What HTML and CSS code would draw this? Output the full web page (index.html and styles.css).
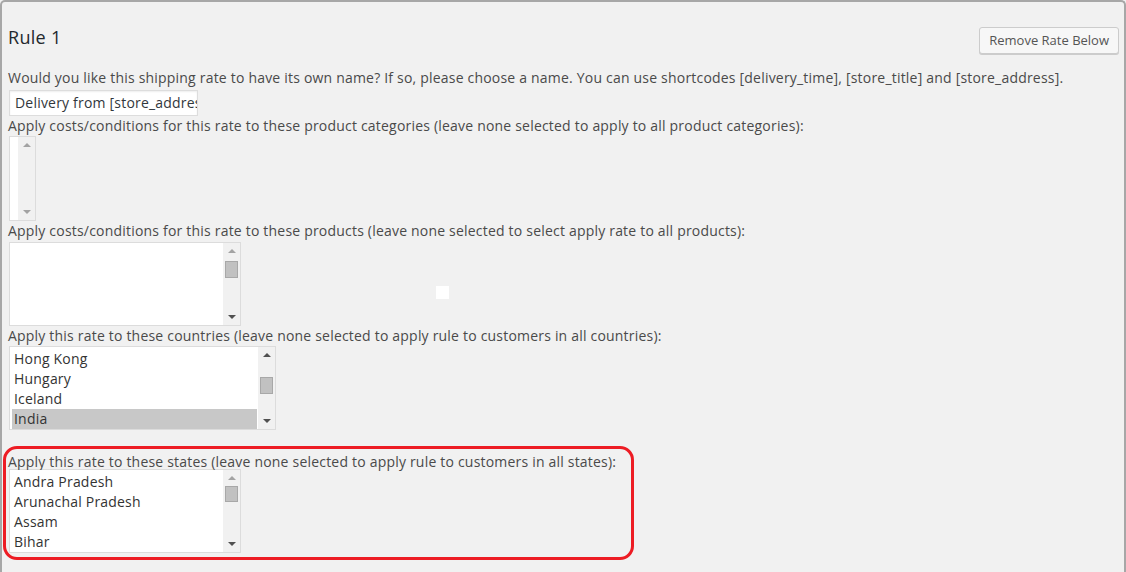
FILE: index.html
```html
<!DOCTYPE html>
<html>
<head>
<meta charset="utf-8">
<link rel="stylesheet" href="styles.css">
</head>
<body>
<div class="frame">
  <div class="header">
    <h2 class="title">Rule 1</h2>
    <button class="btn">Remove Rate Below</button>
  </div>
  <p class="label">Would you like this shipping rate to have its own name? If so, please choose a name. You can use shortcodes [delivery_time], [store_title] and [store_address].</p>
  <div class="input"><span>Delivery from [store_address]</span></div>
  <p class="label">Apply costs/conditions for this rate to these product categories (leave none selected to apply to all product categories):</p>
  <div class="box box-cat">
    <div class="list"></div>
    <div class="sb">
      <span class="arr up off"></span>
      <span class="track"></span>
      <span class="arr down off"></span>
    </div>
  </div>
  <p class="label">Apply costs/conditions for this rate to these products (leave none selected to select apply rate to all products):</p>
  <div class="row">
    <div class="box box-prod">
      <div class="list"></div>
      <div class="sb">
        <span class="arr up off"></span>
        <span class="track"><span class="thumb t-prod"></span></span>
        <span class="arr down"></span>
      </div>
    </div>
    <span class="dot"></span>
  </div>
  <p class="label">Apply this rate to these countries (leave none selected to apply rule to customers in all countries):</p>
  <div class="box box-country">
    <div class="list">
      <div class="opt">Hong Kong</div>
      <div class="opt">Hungary</div>
      <div class="opt">Iceland</div>
      <div class="opt sel">India</div>
    </div>
    <div class="sb">
      <span class="arr up"></span>
      <span class="track"><span class="thumb t-country"></span></span>
      <span class="arr down"></span>
    </div>
  </div>
  <div class="highlight">
    <p class="label">Apply this rate to these states (leave none selected to apply rule to customers in all states):</p>
    <div class="box box-state">
      <div class="list">
        <div class="opt">Andra Pradesh</div>
        <div class="opt">Arunachal Pradesh</div>
        <div class="opt">Assam</div>
        <div class="opt">Bihar</div>
      </div>
      <div class="sb">
        <span class="arr up off"></span>
        <span class="track"><span class="thumb t-state"></span></span>
        <span class="arr down"></span>
      </div>
    </div>
  </div>
</div>
</body>
</html>
```

FILE: styles.css
```css
* { box-sizing: border-box; }
html, body {
  margin: 0;
  padding: 0;
  background: #f1f1f1;
  font-family: "Open Sans", "Liberation Sans", sans-serif;
  color: #4a4a4a;
  font-size: 14px;
  letter-spacing: 0.2px;
  overflow: hidden;
}
.frame {
  height: 572px;
  border: 2px solid #a7a7a7;
  border-bottom: none;
  border-radius: 5px 5px 0 0;
  padding: 0 5px 0 6px;
}
.header {
  display: flex;
  justify-content: space-between;
  align-items: flex-start;
}
.title {
  margin: 23px 0 0 0;
  font-size: 18px;
  line-height: 24px;
  font-weight: 400;
  letter-spacing: 0.3px;
  color: #23282d;
}
.btn {
  margin-top: 25px;
  height: 27px;
  padding: 0 9px;
  border: 1px solid #cccccc;
  border-radius: 3px;
  background: #f7f7f7;
  color: #555;
  font-family: "Open Sans", "Liberation Sans", sans-serif;
  font-size: 13px;
  letter-spacing: 0;
  line-height: 25px;
  box-shadow: 0 1px 0 #ccc;
}
.label {
  margin: 0;
  line-height: 20px;
  white-space: nowrap;
}
.header + .label { margin-top: 14px; }
.input {
  margin: 2px 0 0 1px;
  width: 189px;
  height: 26px;
  border: 1px solid #ddd;
  background: #fff;
  padding: 0 6px 0 5px;
  overflow: hidden;
  white-space: nowrap;
  line-height: 24px;
  color: #32373c;
  box-shadow: inset 0 1px 2px rgba(0,0,0,0.07);
}
.box {
  display: flex;
  margin-left: 1px;
  border: 1px solid #dcdcdc;
  background: #fff;
}
.box-cat { width: 27px; height: 85px; }
.box-prod { width: 232px; height: 84px; margin-top: 1px; }
.box-country { width: 267px; height: 84px; }
.box-state { width: 232px; height: 84px; margin-top: -3px; }
.list {
  flex: 1;
  padding: 2px 1px 0 2px;
  background: #fff;
}
.box-cat .list { flex: 0 0 8px; padding: 0; }
.box-state .list { padding-top: 2px; }
.opt {
  height: 20px;
  line-height: 20px;
  padding-left: 2px;
  color: #333;
}
.opt.sel { background: #c8c8c8; }
.sb {
  width: 17px;
  flex: 0 0 17px;
  background: #f1f1f1;
  display: flex;
  flex-direction: column;
  align-items: center;
}
.arr {
  width: 0;
  height: 0;
  border-left: 4px solid transparent;
  border-right: 4px solid transparent;
  flex: 0 0 auto;
}
.arr.up {
  margin: 6px 0 5px;
  border-bottom: 4px solid #505050;
}
.arr.down {
  margin: 5px 0 6px;
  border-top: 4px solid #505050;
}
.arr.up.off { border-bottom-color: #a3a3a3; }
.arr.down.off { border-top-color: #a3a3a3; }
.track {
  flex: 1;
  width: 100%;
  display: flex;
  justify-content: center;
}
.thumb {
  width: 13px;
  background: #c1c1c1;
  border: 1px solid #a8a8a8;
}
.t-prod { height: 17px; margin-top: 3px; }
.t-country { height: 17px; margin-top: 15px; }
.t-state { height: 16px; margin-top: 1px; }
.row {
  display: flex;
  align-items: flex-start;
}
.dot {
  width: 13px;
  height: 13px;
  background: #fff;
  margin: 45px 0 0 195px;
}
.highlight {
  margin: 16px 0 0 -5px;
  width: 631px;
  height: 114px;
  border: 3px solid #ed1c24;
  border-radius: 14px;
  padding: 3px 0 0 2px;
}
```
